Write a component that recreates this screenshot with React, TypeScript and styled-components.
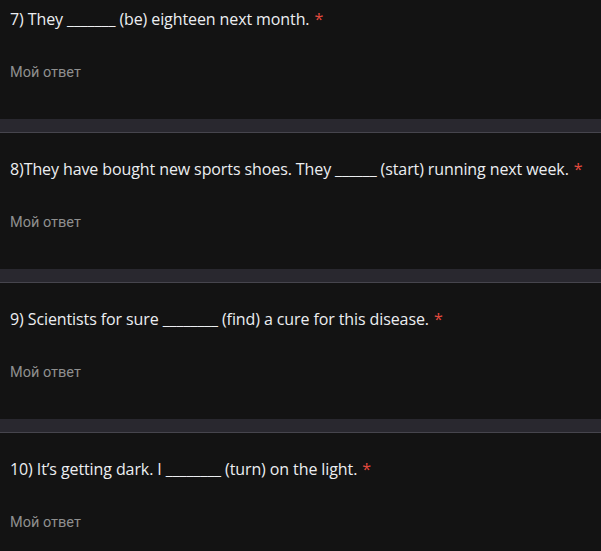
import styled, { createGlobalStyle } from "styled-components";

const GlobalStyle = createGlobalStyle`
    html, body {
        margin: 0;
        padding: 0;
        background-color: #131313;
    }
`

const Lista = styled.div`
    display: flex;
    flex-direction: column;
    margin-top: -17px;
`

const Cartao = styled.div`
    display: flex;
    flex-direction: column;
    background-color: #131313;
    padding: 25px 10px 36px 10px;
    gap: 33px;
`

const Separador = styled.div`
    height: 13px;
    background-color: #29282f;
    border-bottom: 1px solid #46454d;
`

const Pergunta = styled.div`
    font-family: "Open Sans", "Liberation Sans", sans-serif;
    font-size: 16px;
    font-weight: 500;
    line-height: 22px;
    letter-spacing: -0.1px;
    color: #eceef1;
    white-space: nowrap;
`

const Asterisco = styled.span`
    color: #e44a3e;
    margin-left: 5px;
`

const Resposta = styled.div`
    font-family: Roboto, "Liberation Sans", sans-serif;
    font-size: 14.5px;
    line-height: 20px;
    color: #8f8f8f;
`

const perguntas = [
    "7) They _______ (be) eighteen next month.",
    "8)They have bought new sports shoes. They ______ (start) running next week.",
    "9) Scientists for sure ________ (find) a cure for this disease.",
    "10) It\u2019s getting dark. I ________ (turn) on the light.",
]

const App = () => {
    return (
        <>
            <GlobalStyle />
            <Lista>
                {perguntas.map((texto, i) => (
                    <div key={i}>
                        {i > 0 && <Separador />}
                        <Cartao>
                            <Pergunta>
                                {texto}
                                <Asterisco>*</Asterisco>
                            </Pergunta>
                            <Resposta>Мой ответ</Resposta>
                        </Cartao>
                    </div>
                ))}
            </Lista>
        </>
    )
}

export default App;
